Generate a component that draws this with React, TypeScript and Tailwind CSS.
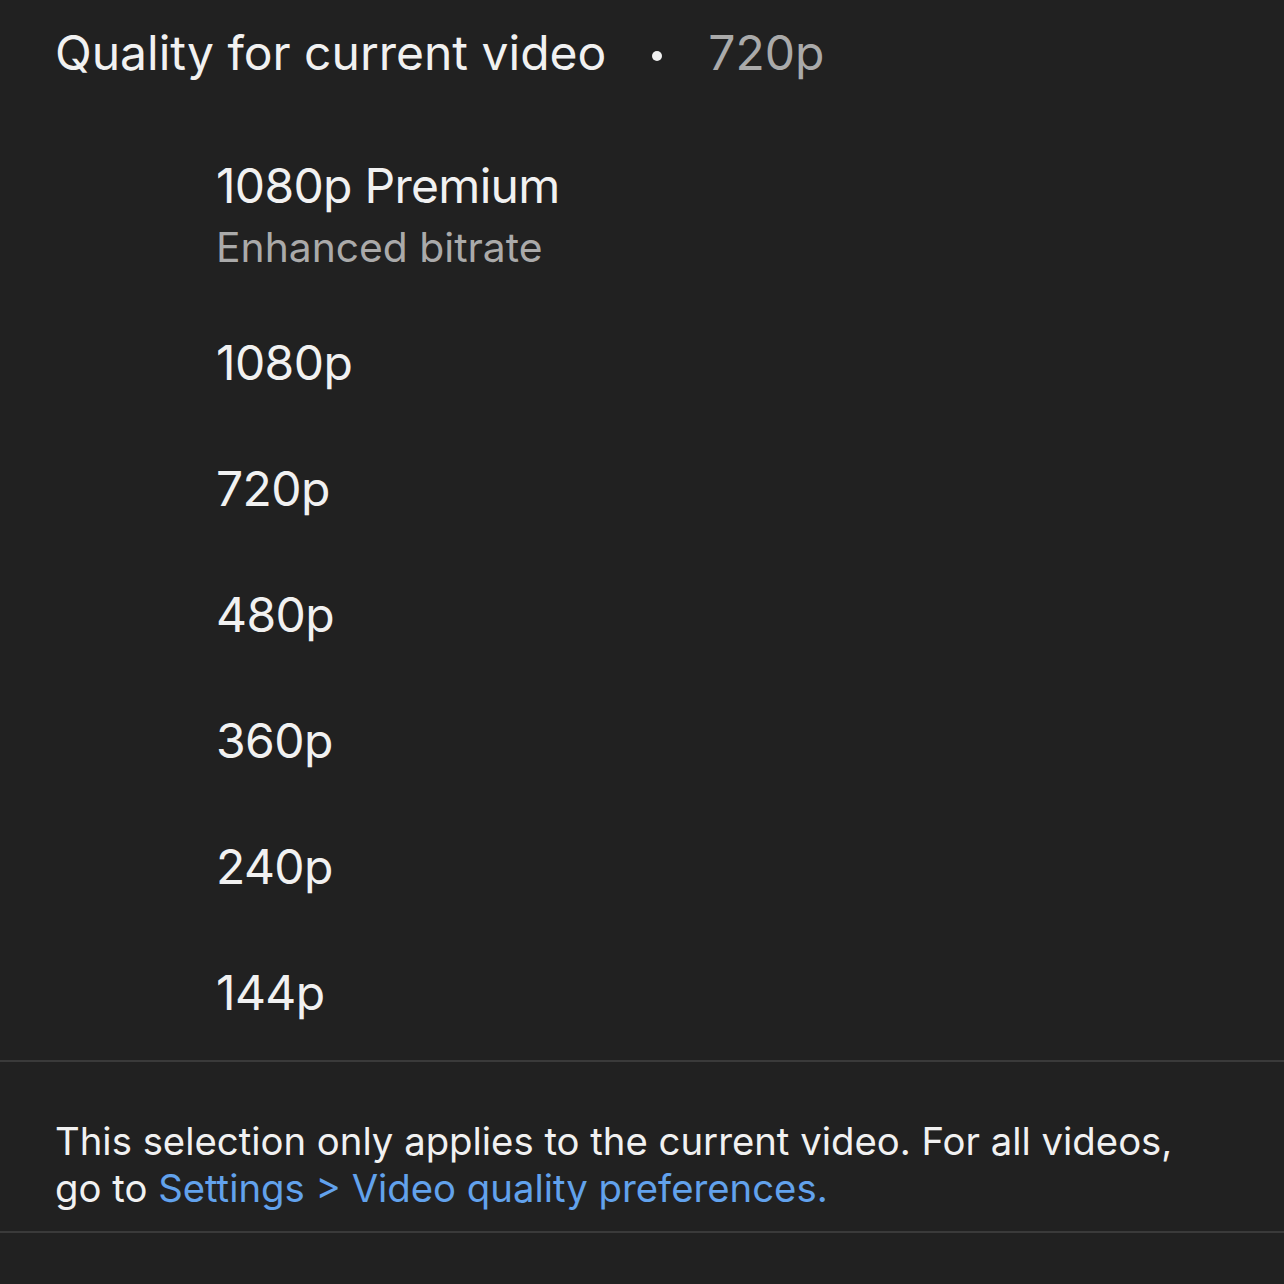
import React from 'react';

const qualities = ['1080p', '720p', '480p', '360p', '240p', '144p'];

const App = () => {
  return (
    <div className="w-[1284px] h-[1284px] bg-[#212121] text-[#f1f1f1] font-['Inter',sans-serif] overflow-hidden">
      {/* Header */}
      <div className="h-[110px] pl-[55px] pt-[23px] flex items-start text-[48px] leading-[60px]">
        <span>Quality for current video</span>
        <span className="mx-[46px] mt-[28px] w-[10px] h-[10px] rounded-full bg-[#f1f1f1]" />
        <span className="text-[#aaaaaa]">720p</span>
      </div>

      {/* Premium option */}
      <div className="h-[190px] pl-[216px] pt-[46px]">
        <div className="text-[48px] leading-[60px] tracking-[-0.7px]">1080p Premium</div>
        <div className="text-[40.8px] leading-[62px] text-[#aaaaaa]">Enhanced bitrate</div>
      </div>

      {/* Options */}
      <div className="flex flex-col">
        {qualities.map((q) => (
          <div key={q} className="h-[126px] pl-[216px] flex items-center text-[48px] leading-[60px] tracking-[-0.6px]">
            {q}
          </div>
        ))}
      </div>

      <div className="mt-[4px] h-[2px] bg-[#3a3a3a]" />

      {/* Footer note */}
      <div className="pl-[55px] pr-[40px] pt-[56px] pb-[19px] text-[38.3px] leading-[47px]">
        This selection only applies to the current video. For all videos,
        <br />
        go to <span className="text-[#62a2ec]">Settings &gt; Video quality preferences.</span>
      </div>

      <div className="h-[2px] bg-[#3a3a3a]" />
    </div>
  );
};

export default App;
